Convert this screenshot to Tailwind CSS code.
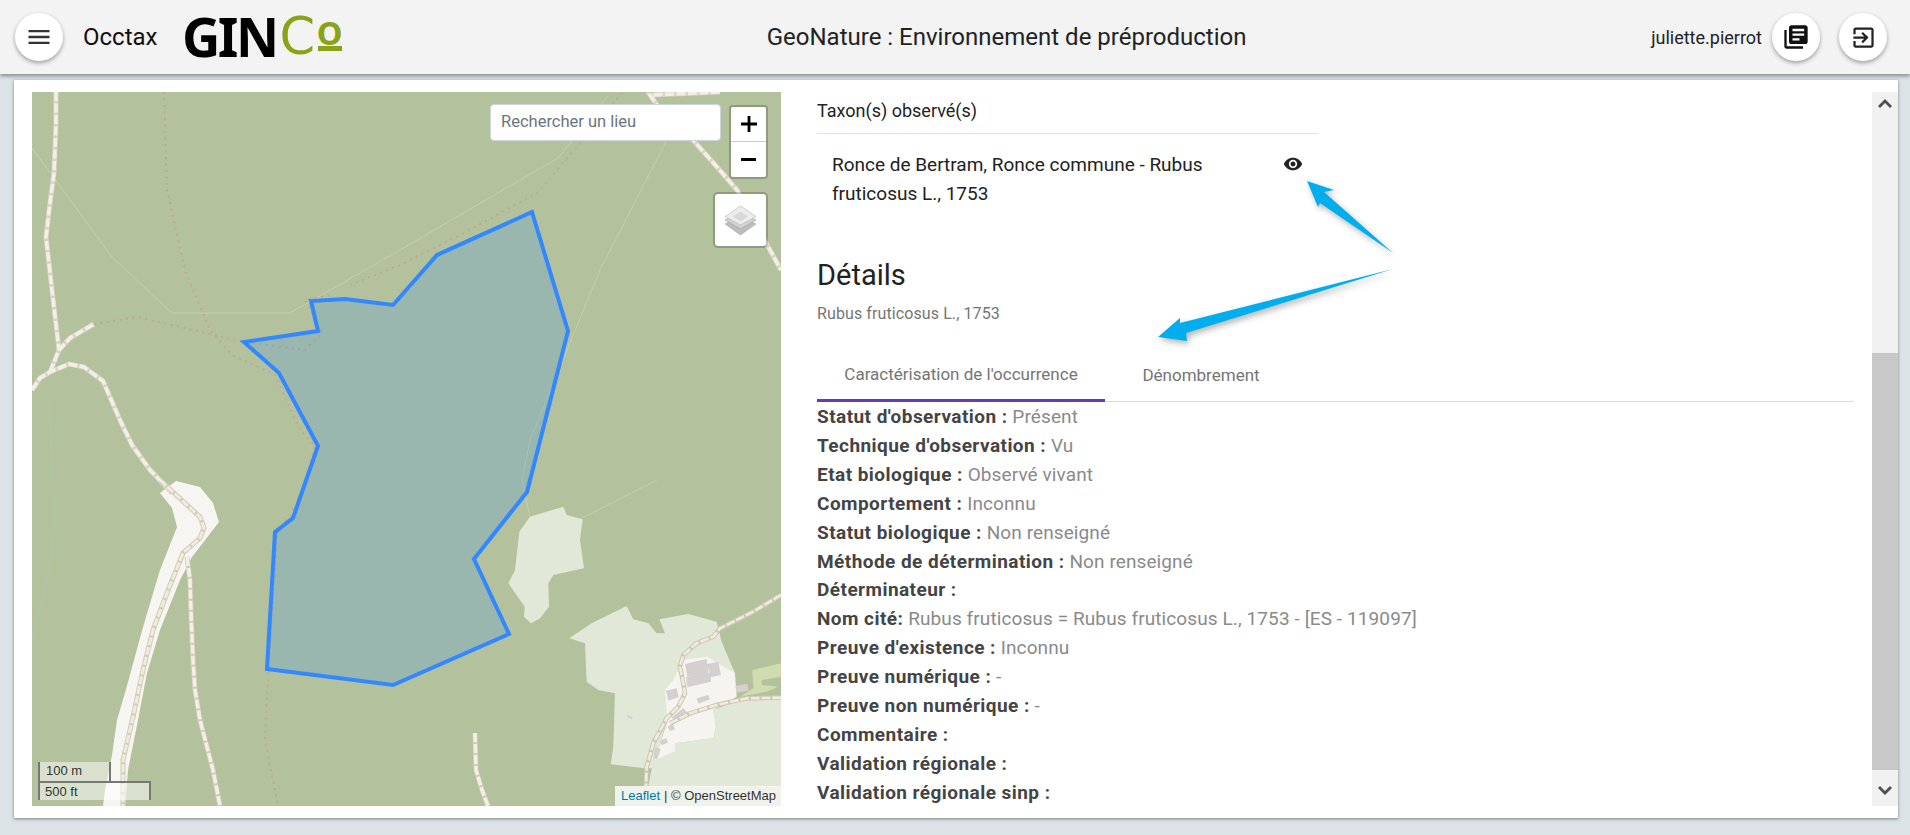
<!DOCTYPE html>
<html lang="fr">

<head>
  <meta charset="UTF-8" />
  <meta name="viewport" content="width=device-width, initial-scale=1" />
  <title>GeoNature - Occtax</title>
  <script src="https://cdn.jsdelivr.net/npm/@tailwindcss/browser@4"></script>
</head>

<body class="h-[835px] overflow-hidden bg-[#dbe3e7] [font-family:Roboto,sans-serif] relative">
  <!-- Top bar -->
  <header class="relative z-10 h-[74px] bg-[#f3f3f3] shadow-[0_2px_4px_rgba(0,0,0,0.4)] flex items-center pl-[15px] pr-[23px]">
    <button class="w-12 h-12 rounded-full bg-white shadow-[0_2px_4px_rgba(0,0,0,0.35)] flex items-center justify-center">
      <svg class="w-[28px] h-[28px] fill-[#333]" viewBox="0 0 24 24"><path d="M3 18h18v-2H3v2zm0-5h18v-2H3v2zm0-7v2h18V6H3z" /></svg>
    </button>
    <span class="ml-[20px] text-[24px] w-[75px] text-[#111]">Occtax</span>
    <div class="ml-[24px] flex items-start h-[40px] w-[160px] text-black leading-[40px] text-[53px] shrink-0">
      <span class="[font-family:'Noto_Sans',sans-serif] font-bold tracking-[-2.500px]">GIN</span>
      <span class="text-[#8aa217] [font-family:'DejaVu_Sans',sans-serif] text-[51px] ml-[3px]">C</span>
      <span class="ml-[2px] flex flex-col items-center w-[25px]">
        <span class="text-[#8aa217] [font-family:Lato,sans-serif] font-bold text-[44px] leading-[28px] mt-[-3px]">o</span>
        <span class="w-[24px] h-[5px] bg-[#8aa217] mt-[4px]"></span>
      </span>
    </div>
    <div class="flex-1 text-center text-[24px] text-[#222] pl-[20px]">GeoNature : Environnement de préproduction</div>
    <span class="text-[18px] text-[#222] mr-[10px]">juliette.pierrot</span>
    <button class="w-12 h-12 rounded-full bg-white shadow-[0_2px_4px_rgba(0,0,0,0.35)] flex items-center justify-center">
      <svg class="w-[28px] h-[28px] fill-[#111]" viewBox="0 0 24 24"><path d="M4 6H2v14c0 1.1.9 2 2 2h14v-2H4V6zm16-4H8c-1.1 0-2 .9-2 2v12c0 1.1.9 2 2 2h12c1.1 0 2-.9 2-2V4c0-1.1-.9-2-2-2zm-1 9H9V9h10v2zm-4 4H9v-2h6v2zm4-8H9V5h10v2z" /></svg>
    </button>
    <button class="ml-[19px] w-12 h-12 rounded-full bg-white shadow-[0_2px_4px_rgba(0,0,0,0.35)] flex items-center justify-center">
      <svg class="w-[27px] h-[27px] fill-[#222]" viewBox="0 0 24 24"><path d="M10.09 15.59L11.5 17l5-5-5-5-1.41 1.41L12.67 11H3v2h9.67l-2.58 2.59zM19 3H5c-1.11 0-2 .9-2 2v4h2V5h14v14H5v-4H3v4c0 1.1.89 2 2 2h14c1.1 0 2-.9 2-2V5c0-1.1-.9-2-2-2z" /></svg>
    </button>
  </header>

  <!-- Main card -->
  <main class="absolute left-[14px] top-[80px] w-[1884px] h-[738px] bg-white shadow-[0_1px_3px_rgba(0,0,0,0.45)] flex py-[12px] pl-[18px]">
    <!-- Map -->
    <div class="relative w-[749px] h-[714px] bg-[#b3c29c] overflow-hidden shrink-0">
      <svg class="w-full h-full" viewBox="32 92 749 714" fill="none">
        <!-- thin paths -->
        <g stroke="#c3cfae" stroke-width="1">
          <path d="M32 148L112 257L172 313H290L400 250L460 215L558 158L608 96" />
          <path d="M667 140L600 270L530 440L522 480L530 517" />
          <path d="M582 518L657 480" />
        </g>
        <path d="M56 490L52 550L47 580L32 640" stroke="#a8c8b8" stroke-width="1" opacity=".7" />
        <path d="M49 403L53 480" stroke="#a8c8b8" stroke-width="1" opacity=".7" />

        <!-- pale road -->
        <path d="M160 493L176 481L200 487L213 503L219 522L192 557L180 580L160 630L147 673L138 720L128 770L125 806H103L105 790L112 755L117 720L125 693L143 627L160 570L177 527L172 508Z" fill="#f6f5f1" />

        <!-- fields, coordinates taken from the 3x crop -->
        <g transform="translate(400 480) scale(.3333)">
          <path d="M390 110L490 80L500 105L548 118L540 180L552 265L460 285L445 310L447 380L420 415L393 430L372 410L374 380L325 310L345 270L358 155Z" fill="#e1e8d7" />
          <path d="M508 475L575 430L680 378L700 418L745 430L770 460L795 460L778 418L865 402L950 425L965 485L1005 580L1000 660L800 720L760 865L735 865L632 853L640 800L645 640L595 630L560 605L555 490Z" fill="#e1e8d7" />
          <path d="M1143 655L1020 660L940 690L948 740L940 775L825 790L825 815L760 840L745 920H1143Z" fill="#e1e8d7" />
          <path d="M795 630L820 600L850 540L920 530L1005 580L1010 650L940 690L948 740L940 775L825 790L825 815L765 840L800 730L800 690Z" fill="#f5f4f0" />
          <path d="M1057 570L1143 550V590L1085 600V615L1135 620L1100 635L1020 650L1060 625Z" fill="#cfdcaf" />
          <g fill="#d5d0d0">
            <path d="M855 552L920 537L925 580L862 590ZM920 552L955 545L963 585L932 592ZM858 592L930 578L933 605L862 622Z" />
            <path d="M798 632L830 625L836 652L805 662ZM890 655L925 645L930 658L895 671ZM1006 618L1042 611L1046 632L1010 638ZM815 712L850 685L865 700L825 722ZM803 738L820 733L825 748L810 753ZM780 782L800 774L804 788L784 796ZM765 800L782 808L772 838L760 835ZM682 706L698 710L696 718L683 714Z" />
          </g>
          <path d="M1143 345L1060 395L960 445L940 470L890 490L850 525L840 560L850 610L855 640L835 680L800 715L760 790L740 860L738 920" stroke="#cfc7b2" stroke-width="14" />
          <path d="M1143 345L1060 395L960 445L940 470L890 490L850 525L840 560L850 610L855 640L835 680L800 715L760 790L740 860L738 920" stroke="#efebe0" stroke-width="8" stroke-dasharray="26 6" />
          <path d="M1143 653L1040 655L950 675L870 700L810 730" stroke="#cfc7b2" stroke-width="14" />
          <path d="M1143 653L1040 655L950 675L870 700L810 730" stroke="#efebe0" stroke-width="8" stroke-dasharray="26 6" />
        </g>

        <!-- dotted tracks -->
        <g stroke="#bfa890" stroke-width="2" stroke-dasharray="2 4.500" stroke-linecap="butt">
          <path d="M164 92L167 190L185 270L210 330L232 355L275 375L300 430L315 446L300 500L277 535L268 673L265 740L278 806" />
          <path d="M94 324L137 317L244 342L305 350L322 333L305 300L330 295" />
          <path d="M622 93L577 147L537 193L460 235L400 265L350 285" />
        </g>

        <!-- dashed tracks -->
        <g fill="none">
          <path d="M56 92V123L54 173L50 203L46 237L52 290L59 350M50 372L59 350L70 338L94 324M32 390L40 378L50 372L69 364L84 367L103 381L120 420L132 445L150 470L172 493" stroke="#d8d3c4" stroke-width="5" />
          <path d="M56 92V123L54 173L50 203L46 237L52 290L59 350M50 372L59 350L70 338L94 324M32 390L40 378L50 372L69 364L84 367L103 381L120 420L132 445L150 470L172 493" stroke="#f3efe6" stroke-dasharray="9 2.5" stroke-width="3.6" />
          <path d="M160 480L200 517L204 528L200 538L183 553L167 593L153 630L143 670L133 717L123 760V806" stroke="#d3ccb9" stroke-width="5" />
          <path d="M160 480L200 517L204 528L200 538L183 553L167 593L153 630L143 670L133 717L123 760V806" stroke="#efebe0" stroke-width="3" stroke-dasharray="8 2" />
          <path d="M187 557L190 580L191 613L193 660L195 690L200 720L213 770L220 806" stroke="#d3ccb9" stroke-width="5" />
          <path d="M187 557L190 580L191 613L193 660L195 690L200 720L213 770L220 806" stroke="#f3efe6" stroke-width="3.6" stroke-dasharray="9 2" />
          <path d="M475 733L476 770L482 790L488 806" stroke="#d3ccb9" stroke-width="5" />
          <path d="M475 733L476 770L482 790L488 806" stroke="#f3efe6" stroke-width="3.6" stroke-dasharray="9 2" />
          <path d="M720 92L650 95L657 105L693 140L717 167L737 190L770 250L781 270" stroke="#d8d3c4" stroke-width="5" />
          <path d="M720 92L650 95L657 105L693 140L717 167L737 190L770 250L781 270" stroke="#f3efe6" stroke-width="3.6" stroke-dasharray="9 2.5" />
        </g>

        <!-- observation polygon -->
        <path d="M532 212L568 331L527 492L474 559L509 634L393 685L267 669L275 532L293 518L318 446L279 373L244 342L318 331L311 301L345 299L393 305L437 255Z" fill="#3388ff" fill-opacity=".2" stroke="#3388ff" stroke-width="4" stroke-linejoin="miter" />
      </svg>

      <!-- search -->
      <div class="absolute left-[458px] top-[12px] w-[231px] h-[37px] bg-white border border-[#ced4da] rounded-[4px] flex items-center pl-[10px] text-[16.500px] text-[#6c757d]">Rechercher un lieu</div>

      <!-- zoom -->
      <div class="absolute left-[697px] top-[13px] w-[39px] h-[74px] border-2 border-black/20 rounded-[4px] bg-clip-padding">
        <div class="h-[35px] bg-white rounded-t-[2px] border-b border-[#ccc] flex items-center justify-center">
          <svg class="w-[16px] h-[16px] fill-black" viewBox="0 0 16 16"><path d="M6.6 0h2.8v6.6H16v2.8H9.4V16H6.6V9.4H0V6.6h6.6z" /></svg>
        </div>
        <div class="h-[35px] bg-white rounded-b-[2px] flex items-center justify-center">
          <svg class="w-[15px] h-[3px] fill-black" viewBox="0 0 15 3"><path d="M0 0h15v3H0z" /></svg>
        </div>
      </div>

      <!-- layers -->
      <div class="absolute left-[681px] top-[100px] w-[55px] h-[56px] border-2 border-black/20 rounded-[5px] bg-clip-padding bg-white flex items-center justify-center">
        <svg class="w-[33px] h-[31px]" viewBox="0 0 33 31">
          <path d="M1 19L16.5 11L32 19L16.5 30Z" fill="#bdbdbd" stroke="#aaa" stroke-width=".6" />
          <path d="M1 15L16.5 7L32 15L16.5 24Z" fill="#d2d2d2" stroke="#9e9e9e" stroke-width=".6" />
          <path d="M1 11.500L16.500 1L32 11.500L16.500 20Z" fill="#ececec" stroke="#b5b5b5" stroke-width=".6" />
          <path d="M9 11.500L16.500 6.500L24 11.500L16.500 16.500Z" fill="#d8d8d8" />
        </svg>
      </div>

      <!-- scale -->
      <div class="absolute left-[6px] bottom-[6px] [font-family:'Liberation_Sans',sans-serif] text-[13px] text-[#333] leading-[18px]">
        <div class="w-[73px] h-[19px] border-x-2 border-[#777] bg-white/50 pl-[6px] whitespace-nowrap">100 m</div>
        <div class="w-[113px] h-[19px] border-x-2 border-t-2 border-[#777] bg-white/50 pl-[5px] leading-[17px] whitespace-nowrap">500 ft</div>
      </div>

      <!-- attribution -->
      <div class="absolute right-0 bottom-0 h-[20px] w-[166px] bg-white/80 flex items-center pl-[6px] [font-family:'Liberation_Sans',sans-serif] text-[13px] text-[#333] whitespace-nowrap">
        <span class="text-[#0078a8]">Leaflet</span><span class="ml-[4px]">| © OpenStreetMap</span>
      </div>
    </div>

    <!-- Detail column -->
    <div class="flex-1 min-w-0 pl-[36px] pr-[18px] overflow-hidden">
      <div class="w-[501px]">
        <h5 class="h-[42px] border-b border-[#dee2e6] text-[18px] text-[#222] leading-[38px]">Taxon(s) observé(s)</h5>
        <div class="flex justify-between pl-[15px] pr-[15px] pt-[16px] text-[19px] leading-[29px] text-[#222]">
          <span class="w-[400px]">Ronce de Bertram, Ronce commune - Rubus fruticosus L., 1753</span>
          <svg class="w-[20px] h-[20px] mt-[4px] fill-[#222]" viewBox="0 0 24 24"><path d="M12 4.500C7 4.500 2.730 7.610 1 12c1.730 4.390 6 7.500 11 7.500s9.270-3.110 11-7.500c-1.730-4.390-6-7.500-11-7.500zM12 17c-2.760 0-5-2.240-5-5s2.240-5 5-5 5 2.240 5 5-2.240 5-5 5zm0-8c-1.660 0-3 1.340-3 3s1.340 3 3 3 3-1.340 3-3-1.340-3-3-3z" /></svg>
        </div>
      </div>

      <h2 class="mt-[49px] text-[29px] leading-[36px] text-[#222]">Détails</h2>
      <p class="mt-[10px] text-[16px] tracking-[0.1px] leading-[22px] text-[#757575]">Rubus fruticosus L., 1753</p>

      <!-- Tabs -->
      <div class="mt-[25px] h-[52px] border-b border-[#dcdcdc] flex text-[17px] text-[#757575]">
        <div class="w-[288px] h-[52px] border-b-[3px] border-[#673ab7] flex items-center justify-center">Caractérisation de l'occurrence</div>
        <div class="w-[192px] h-[51px] flex items-center justify-center">Dénombrement</div>
      </div>

      <div class="mt-[1px] text-[19px] tracking-[0.1px] leading-[28.900px] text-[#8a8a8a] whitespace-nowrap">
        <div><b class="font-bold tracking-[0.45px] text-[#444]">Statut d'observation :</b> Présent</div>
        <div><b class="font-bold tracking-[0.45px] text-[#444]">Technique d'observation :</b> Vu</div>
        <div><b class="font-bold tracking-[0.45px] text-[#444]">Etat biologique :</b> Observé vivant</div>
        <div><b class="font-bold tracking-[0.45px] text-[#444]">Comportement :</b> Inconnu</div>
        <div><b class="font-bold tracking-[0.45px] text-[#444]">Statut biologique :</b> Non renseigné</div>
        <div><b class="font-bold tracking-[0.45px] text-[#444]">Méthode de détermination :</b> Non renseigné</div>
        <div><b class="font-bold tracking-[0.45px] text-[#444]">Déterminateur :</b></div>
        <div><b class="font-bold tracking-[0.45px] text-[#444]">Nom cité:</b> Rubus fruticosus = Rubus fruticosus L., 1753 - [ES - 119097]</div>
        <div><b class="font-bold tracking-[0.45px] text-[#444]">Preuve d'existence :</b> Inconnu</div>
        <div><b class="font-bold tracking-[0.45px] text-[#444]">Preuve numérique :</b> -</div>
        <div><b class="font-bold tracking-[0.45px] text-[#444]">Preuve non numérique :</b> -</div>
        <div><b class="font-bold tracking-[0.45px] text-[#444]">Commentaire :</b></div>
        <div><b class="font-bold tracking-[0.45px] text-[#444]">Validation régionale :</b></div>
        <div><b class="font-bold tracking-[0.45px] text-[#444]">Validation régionale sinp :</b></div>
      </div>
    </div>

    <!-- Scrollbar -->
    <div class="w-[26px] h-[714px] bg-[#f1f1f1] shrink-0 flex flex-col">
      <div class="h-[261px] pt-[7px] flex justify-center">
        <svg class="w-[14px] h-[9px] fill-[#505050]" viewBox="0 0 14 9"><path d="M7 0L14 7L12 9L7 4L2 9L0 7Z" /></svg>
      </div>
      <div class="h-[417px] bg-[#c8c8c8]"></div>
      <div class="flex-1 pt-[16px] flex justify-center">
        <svg class="w-[14px] h-[9px] fill-[#505050]" viewBox="0 0 14 9"><path d="M7 9L0 2L2 0L7 5L12 0L14 2Z" /></svg>
      </div>
    </div>
  </main>

  <!-- Annotation arrows -->
  <svg class="absolute left-0 top-0 z-20 pointer-events-none drop-shadow-[2px_3px_3px_rgba(0,0,0,0.3)]" width="1910" height="835" viewBox="0 0 1910 835">
    <path d="M1307 181L1334 190L1324 192L1393 253L1320 203L1318 207Z" fill="#00aeef" />
    <path d="M1158 337L1180 318L1180 323L1393 269L1186 333L1187 341Z" fill="#00aeef" />
  </svg>
</body>

</html>
